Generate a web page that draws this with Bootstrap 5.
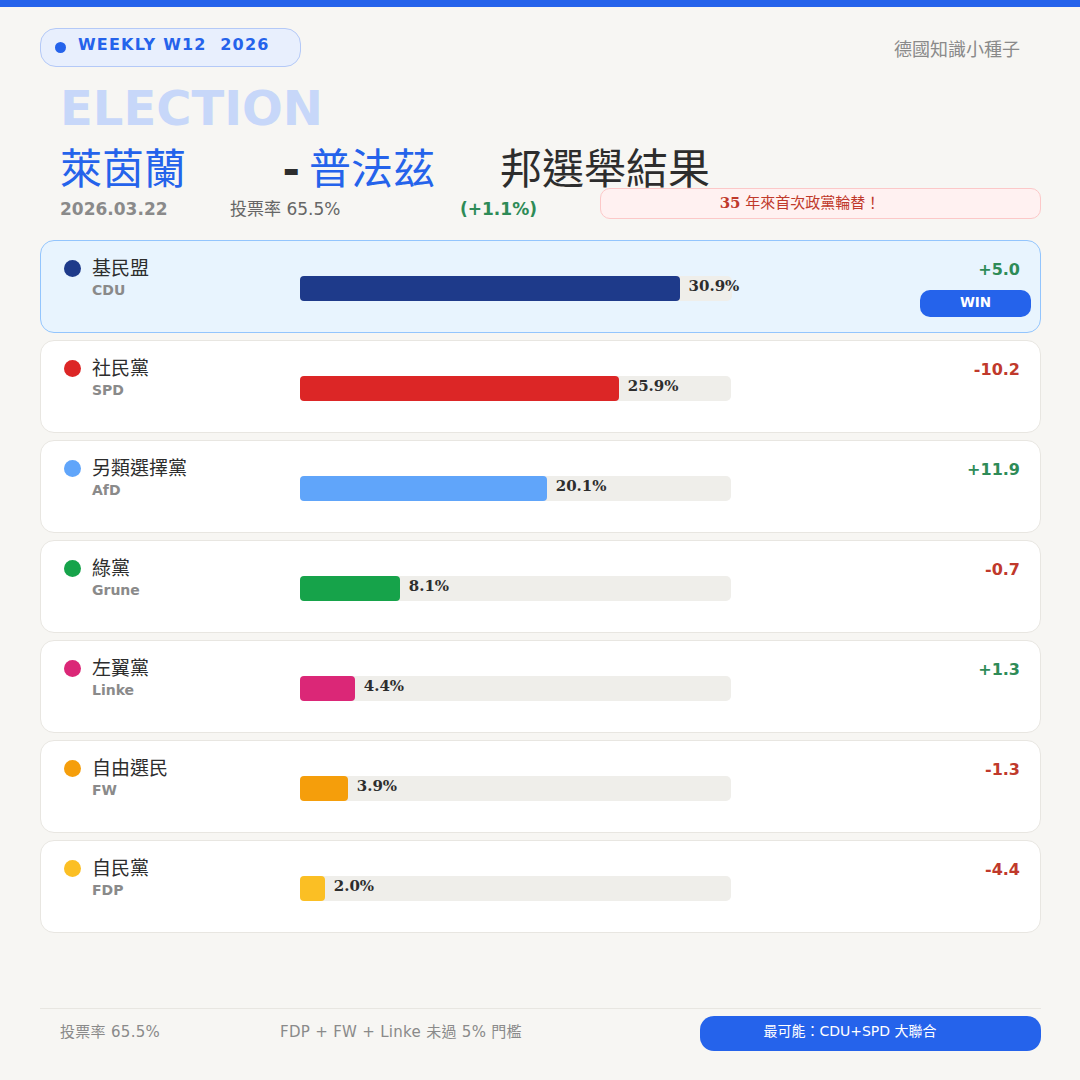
<!DOCTYPE html>
<html lang="zh-Hant">

<head>
    <meta charset="UTF-8">
    <meta name="viewport" content="width=device-width, initial-scale=1.0">
    <title>Election W12 2026</title>
    <link href="https://cdn.jsdelivr.net/npm/bootstrap@5.3.3/dist/css/bootstrap.min.css" rel="stylesheet">
    <style>
        :root {
            --blue: #2563eb;
            --ink: #2d2d2d;
            --up: #2e8b57;
            --down: #c0392b;
        }

        html, body { height: 1080px; overflow: hidden; }

        body {
            background: #f7f6f3;
            color: var(--ink);
            font-family: "DejaVu Sans", "Noto Sans CJK TC", sans-serif;
        }

        .top-bar { height: 7px; background: var(--blue); }
        .sheet { padding: 21px 39px 0 40px; }

        .chip {
            width: 261px;
            height: 39px;
            padding: 0 0 0 14px;
            background: #e8effd;
            border: 1px solid #b4c9f7;
            border-radius: 16px;
            color: var(--blue);
            font-size: 16px;
            font-weight: 700;
            letter-spacing: 1.2px;
            white-space: pre;
        }

        .chip-text { padding-bottom: 6px; }
        .chip-dot { width: 11px; height: 11px; margin: 0 12px 0 0; background: var(--blue); border-radius: 50%; }
        .channel { margin: 0 21px 0 0; padding-top: 8px; color: #8a8a8a; font-size: 18px; }

        .kicker {
            height: 52px;
            margin: 15px 0 0 20px;
            color: #c7d7f9;
            font-size: 48px;
            font-weight: 700;
            line-height: 52px;
        }

        .headline { height: 52px; margin: 10px 0 0 20px; font-size: 42px; line-height: 52px; }
        .headline .place { color: var(--blue); }
        .headline .dash { width: 123px; padding-right: 9px; text-align: right; font-weight: 700; }
        .headline .rest { margin-left: 65px; }

        .stats { height: 33px; margin-top: -8px; }
        .stat { padding-top: 6px; line-height: 30px; }
        .stats .date { width: 170px; margin-left: 20px; color: #8a8a8a; font-size: 17px; font-weight: 700; }
        .stats .turnout { width: 230px; color: #666; font-size: 17px; }
        .stats .swing { width: 140px; color: var(--up); font-size: 17px; font-weight: 700; }

        .flip {
            width: 441px;
            height: 31px;
            padding-right: 41px;
            background: #fff1f1;
            border: 1px solid #fcc8c8;
            border-radius: 10px;
            color: var(--down);
            font-size: 15px;
            line-height: 29px;
            text-align: center;
        }

        .flip b { font-family: "DejaVu Serif", "Noto Sans CJK TC", serif; }

        .party-list { margin-top: 19px; }

        .party {
            height: 93px;
            margin-bottom: 7px;
            background: #fff;
            border: 1px solid #e8e6e1;
            border-radius: 14px;
        }

        .party.winner { background: #e8f4fe; border-color: #93c5fd; }
        .party .card-body { padding: 0; }

        .who { width: 259px; padding: 16px 0 0 23px; }
        .dot { width: 17px; height: 17px; margin: 3px 11px 0 0; border-radius: 50%; }
        .name { margin-top: -1px; font-size: 19px; line-height: 24px; }
        .code { color: #8a8a8a; font-size: 14px; font-weight: 700; line-height: 20px; }

        .track { position: relative; width: 432px; height: 25px; margin-top: 35px; background: #efeeea; border-radius: 5px; }
        .fill { height: 25px; border-radius: 4px; }
        .pct {
            margin-left: 9px;
            padding-bottom: 5px;
            font-family: "DejaVu Serif", serif;
            font-size: 15px;
            font-weight: 700;
            line-height: 20px;
            white-space: nowrap;
        }

        .right { width: 309px; padding: 18px 9px 0 0; text-align: right; }
        .delta { margin-right: 11px; font-size: 16px; font-weight: 700; line-height: 22px; }
        .win {
            display: block;
            width: 111px;
            height: 27px;
            margin: 9px 0 0 auto;
            background: var(--blue);
            border-radius: 10px;
            color: #fff;
            font-size: 13.5px;
            font-weight: 700;
            line-height: 25px;
            text-align: center;
        }

        .foot { margin-top: 75px; padding-top: 7px; border-top: 1px solid #e8e6e1; color: #8a8a8a; font-size: 15px; letter-spacing: 0.3px; }
        .foot .f1 { width: 240px; padding: 5px 0 0 20px; }
        .foot .f2 { width: 420px; padding-top: 5px; }
        .foot .best {
            width: 341px;
            height: 35px;
            padding-right: 41px;
            background: var(--blue);
            border-radius: 14px;
            color: #fff;
            font-size: 14px;
            letter-spacing: 0;
            line-height: 31px;
            text-align: center;
        }
    </style>
</head>

<body>
    <div class="top-bar"></div>

    <div class="sheet">
        <!-- Header -->
        <div class="d-flex justify-content-between align-items-start">
            <div class="chip d-flex align-items-center">
                <span class="chip-dot"></span><span class="chip-text">WEEKLY W12  2026</span>
            </div>
            <div class="channel">德國知識小種子</div>
        </div>

        <div class="kicker">ELECTION</div>

        <div class="headline d-flex">
            <span class="place">萊茵蘭</span>
            <span class="dash">-</span>
            <span class="place">普法茲</span>
            <span class="rest">邦選舉結果</span>
        </div>

        <div class="stats d-flex">
            <div class="stat date">2026.03.22</div>
            <div class="stat turnout">投票率 65.5%</div>
            <div class="stat swing">(+1.1%)</div>
            <div class="flip"><b>35</b> 年來首次政黨輪替！</div>
        </div>

        <!-- Party rows get generated here -->
        <div class="party-list" id="partyList"></div>

        <!-- Footer -->
        <div class="foot d-flex">
            <div class="f1">投票率 65.5%</div>
            <div class="f2">FDP + FW + Linke 未過 5% 門檻</div>
            <div class="best">最可能：CDU+SPD 大聯合</div>
        </div>
    </div>

    <script src="https://cdn.jsdelivr.net/npm/bootstrap@5.3.3/dist/js/bootstrap.bundle.min.js"></script>

    <script>
        // bar = fill width in px on the 432px track
        const parties = [
            { name: "基民盟", code: "CDU", pct: 30.9, bar: 380, delta: "+5.0", color: "#1e3a8a", win: true },
            { name: "社民黨", code: "SPD", pct: 25.9, bar: 319, delta: "-10.2", color: "#dc2626" },
            { name: "另類選擇黨", code: "AfD", pct: 20.1, bar: 247, delta: "+11.9", color: "#60a5fa" },
            { name: "綠黨", code: "Grune", pct: 8.1, bar: 100, delta: "-0.7", color: "#16a34a" },
            { name: "左翼黨", code: "Linke", pct: 4.4, bar: 55, delta: "+1.3", color: "#db2777" },
            { name: "自由選民", code: "FW", pct: 3.9, bar: 48, delta: "-1.3", color: "#f59e0b" },
            { name: "自民黨", code: "FDP", pct: 2.0, bar: 25, delta: "-4.4", color: "#fbbf24" }
        ];

        const list = document.getElementById('partyList');

        parties.forEach(p => {
            const row = document.createElement('div');
            row.classList.add('card', 'party');
            if (p.win) row.classList.add('winner');

            const deltaColor = p.delta[0] === '+' ? 'var(--up)' : 'var(--down)';

            row.innerHTML = `
                <div class="card-body d-flex">
                    <div class="who d-flex">
                        <span class="dot flex-shrink-0" style="background:${p.color}"></span>
                        <div>
                            <div class="name">${p.name}</div>
                            <div class="code">${p.code}</div>
                        </div>
                    </div>
                    <div class="track d-flex align-items-center">
                        <div class="fill flex-shrink-0" style="width:${p.bar}px;background:${p.color}"></div>
                        <span class="pct">${p.pct.toFixed(1)}%</span>
                    </div>
                    <div class="right">
                        <div class="delta" style="color:${deltaColor}">${p.delta}</div>
                        ${p.win ? '<span class="win">WIN</span>' : ''}
                    </div>
                </div>
            `;
            list.appendChild(row);
        });
    </script>
</body>

</html>
